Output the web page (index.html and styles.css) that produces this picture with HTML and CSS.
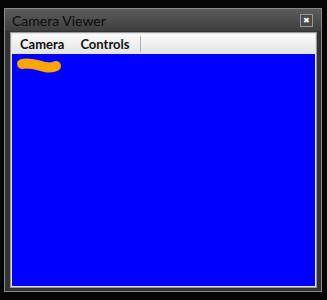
FILE: index.html
```html
<!DOCTYPE html>
<html lang="en">
<head>
    <meta charset="UTF-8">
    <title>Camera Viewer</title>
    <link rel="stylesheet" href="styles.css">
</head>
<body>

    <div class="window">
        <div class="titlebar">
            <span class="title">Camera Viewer</span>
            <span class="close">&#x2716;</span>
        </div>

        <div class="client">
            <!-- Menu -->
            <div class="menubar">
                <span class="menu-item">Camera</span>
                <span class="menu-item">Controls</span>
                <span class="menu-sep"></span>
            </div>

            <!-- Camera view -->
            <div class="view">
                <svg class="mark" width="48" height="18" viewBox="0 0 48 18">
                    <path d="M7 7 C 14 5, 22 8, 30 10 C 35 11, 39 10, 41 9" stroke="#ffa500" stroke-width="10" stroke-linecap="round" fill="none"/>
                </svg>
            </div>
        </div>
    </div>

</body>
</html>
```

FILE: styles.css
```css
body {
    margin: 0;
    background: #050505;
    font-family: Lato, sans-serif;
    height: 300px;
    overflow: hidden;
}
.window {
    margin: 8px 5px 0 4px;
    height: 284px;
    border: 1px solid #8a8a8a;
    background: #333;
    display: flex;
    flex-direction: column;
    padding: 0 4px 3px 5px;
    box-sizing: border-box;
}
.titlebar {
    height: 22px;
    display: flex;
    align-items: center;
    justify-content: space-between;
    background: linear-gradient(#5c5c5c, #3e3e3e);
    margin: 0 -4px 0 -5px;
    padding: 0 8px 0 7px;
}
.title {
    font-size: 14px;
    color: #0c0c0c;
}
.close {
    width: 11px;
    height: 11px;
    border: 1px solid #999;
    background: #4a4a4a;
    color: #fff;
    font-size: 8px;
    line-height: 11px;
    text-align: center;
}
.client {
    flex: 1;
    display: flex;
    flex-direction: column;
    border: 1px solid #9a9a9a;
    background: #e4e4e4;
    padding: 1px;
    margin-top: 1px;
}
.menubar {
    height: 20px;
    display: flex;
    align-items: center;
    background: linear-gradient(#fbfbfb, #e4e4e4);
}
.menu-item {
    font-size: 13px;
    font-weight: bold;
    color: #111;
    padding: 0 8px;
}
.menu-sep {
    width: 1px;
    height: 16px;
    background: #b0b0b0;
    margin-left: 3px;
}
.view {
    flex: 1;
    background: #0000ff;
}
.mark {
    display: block;
    margin: 3px 0 0 3px;
}
```
